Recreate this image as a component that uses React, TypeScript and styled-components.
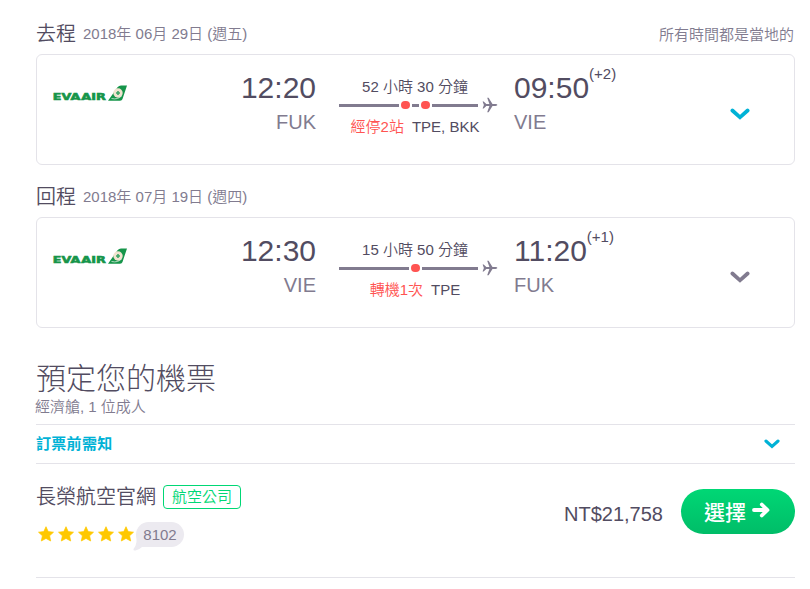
import React from 'react';
import styled, { createGlobalStyle } from 'styled-components';

const c = {
  dark: '#524c61',
  grey: '#817b8f',
  line: '#e4e3e9',
  cyan: '#00b2d6',
  red: '#ff5452',
  green: '#00d775',
  star: '#ffc800',
};

const GlobalStyle = createGlobalStyle`
  * { box-sizing: border-box; }
  body {
    margin: 0;
    background: #fff;
    color: ${c.dark};
    font-family: "Liberation Sans", "Noto Sans CJK TC", sans-serif;
    font-size: 15px;
    line-height: 20px;
    font-weight: 350;
  }
  svg { display: block; flex: none; }
`;

const Page = styled.main`
  width: 810px;
  height: 589px;
  padding: 2px 15px 0 36px;
  overflow: hidden;
`;

const LegHeader = styled.header`
  display: flex;
  align-items: flex-start;
  height: 52px;
  padding-top: 18px;
`;

const LegTitle = styled.h2`
  margin: 0 7px 0 0;
  font-size: 20px;
  font-weight: 350;
  line-height: 28px;
`;

const LegDate = styled.span`
  margin-top: 4px;
  color: ${c.grey};
`;

const LocalTimes = styled.span`
  margin: 5px 1px 0 auto;
  color: ${c.grey};
`;

const Card = styled.section`
  display: grid;
  grid-template-columns: 90px 189px 23px 159px 16px 1fr 64px;
  height: 111px;
  border: 1px solid ${c.line};
  border-radius: 6px;
`;

const LogoCell = styled.div`
  padding: 28px 0 0 15px;
`;

const Stop = styled.div<{ $end?: boolean }>`
  padding-top: 13px;
  text-align: ${(p) => (p.$end ? 'right' : 'left')};
`;

const TimeRow = styled.div`
  display: flex;
  align-items: flex-start;
`;

const Time = styled.div`
  font-size: 30px;
  line-height: 40px;
`;

const DayOffset = styled.div`
  margin-top: -4px;
`;

const Airport = styled.div`
  margin-top: 1px;
  font-size: 20px;
  line-height: 26px;
  color: ${c.grey};
`;

const Route = styled.div`
  padding-top: 22px;
`;

const Duration = styled.div`
  width: 152px;
  text-align: center;
`;

const Track = styled.div`
  display: flex;
  align-items: center;
  height: 20px;
  margin-top: -2px;
`;

const Rail = styled.div`
  display: flex;
  align-items: center;
  justify-content: center;
  gap: 2px;
  width: 139px;
`;

const Bar = styled.i<{ $short?: boolean; $first?: boolean }>`
  flex: ${(p) => (p.$short ? '0 0 7px' : p.$first ? '1 0 13px' : '1 0 0px')};
  height: 3px;
  background: ${c.grey};
`;

const Dot = styled.i`
  width: 9px;
  height: 8px;
  border-radius: 4px;
  background: ${c.red};
`;

const Stops = styled.div`
  display: flex;
  justify-content: center;
  gap: 8px;
  width: 152px;
  margin-top: 2px;
`;

const StopCount = styled.span`
  color: ${c.red};
`;

const Toggle = styled.div`
  padding-top: 53px;
`;

const BookingTitle = styled.h1`
  margin: 30px 0 0;
  font-size: 30px;
  line-height: 41px;
  font-weight: 300;
`;

const Subtitle = styled.div`
  margin-top: -2px;
  margin-left: -1px;
  height: 27px;
  color: ${c.grey};
`;

const Notice = styled.div`
  display: flex;
  align-items: center;
  justify-content: space-between;
  height: 40px;
  padding-right: 15px;
  border: 1px solid ${c.line};
  border-width: 1px 0;
  color: ${c.cyan};
  font-weight: 700;
  letter-spacing: 0.3px;
`;

const Offer = styled.section`
  display: flex;
  align-items: flex-start;
  height: 114px;
  border-bottom: 1px solid ${c.line};
`;

const Vendor = styled.div`
  flex: 1;
  padding-top: 21px;
`;

const NameRow = styled.div`
  display: flex;
  align-items: center;
  gap: 7px;
`;

const Name = styled.div`
  font-size: 20px;
  line-height: 24px;
`;

const Tag = styled.span`
  width: 78px;
  height: 24px;
  border: 1px solid ${c.green};
  border-radius: 4px;
  line-height: 22px;
  text-align: center;
  color: ${c.green};
`;

const RatingRow = styled.div`
  display: flex;
  align-items: center;
  gap: 4px;
  height: 25px;
  margin-top: 12px;
  padding-left: 2px;
`;

const Reviews = styled.span`
  position: relative;
  height: 25px;
  width: 48px;
  margin: 1px 0 0 -2px;
  border-radius: 13px;
  background: #eceaf0;
  color: ${c.grey};
  line-height: 26px;
  text-align: center;
  svg { position: absolute; left: -3px; top: 12px; }
  b { position: relative; font-weight: 400; }
`;

const Price = styled.div`
  margin: 36px 18px 0 0;
  font-size: 20px;
  line-height: 28px;
`;

const SelectButton = styled.button`
  display: flex;
  align-items: center;
  gap: 6px;
  width: 114px;
  height: 45px;
  margin-top: 25px;
  padding: 2px 0 0 23px;
  border: 0;
  border-radius: 23px;
  background: linear-gradient(#00d775, #00bd68);
  color: #fff;
  font: 500 21px/30px "Liberation Sans", "Noto Sans CJK TC", sans-serif;
`;

const EvaLogo = () => (
  <svg width="78" height="22" viewBox="0 0 78 22">
    <g fill="#16954a" stroke="#16954a" strokeWidth="0.6" fontFamily="DejaVu Sans" fontWeight="700" fontSize="9">
      <text x="0.8" y="17.4" textLength="27.5" lengthAdjust="spacingAndGlyphs">EVA</text>
      <text x="29.3" y="17.4" textLength="24.5" lengthAdjust="spacingAndGlyphs">AIR</text>
    </g>
    <path d="M56 17.7L65.5 4.2Q67 2.4 69 2.4H75L70.5 16Q70 17.7 68 17.7Z" fill="#16954a" />
    <circle cx="66" cy="10" r="4.7" fill="#f1e3cf" />
    <path d="M66 8V12M64 10H68" stroke="#3da568" strokeWidth="1.6" />
    <path d="M59.5 15.5Q66 17 70 12.5" fill="none" stroke="#d6eadb" strokeWidth="0.8" />
  </svg>
);

const Plane = () => (
  <svg width="16" height="16" viewBox="0 0 16 16">
    <path d="M.6 4.4H1.7L4.3 7.1H7.4L5.2.7H6.6L10.5 7.1H13.5Q15.4 7.3 15.4 8Q15.4 8.7 13.5 8.9H10.5L6.6 15.3H5.2L7.4 8.9H4.3L1.7 11.6H.6L1.9 8Z" fill={c.grey} />
  </svg>
);

const Chevron = ({ color, width = 20 }: { color: string; width?: number }) => (
  <svg width={width} height={width * 0.6} viewBox="0 0 20 12">
    <path d="M2.4 2.5L10 9.3L17.6 2.5" fill="none" stroke={color} strokeWidth="3.8" strokeLinecap="round" />
  </svg>
);

const Star = () => (
  <svg width="16" height="16" viewBox="0 0 16 16">
    <path d="M8 .7L10.2 5.6L15.5 6.2L11.6 9.8L12.7 15L8 12.4L3.3 15L4.4 9.8L.5 6.2L5.8 5.6Z" fill={c.star} stroke={c.star} strokeWidth=".7" strokeLinejoin="round" />
  </svg>
);

const Arrow = () => (
  <svg width="18" height="16" viewBox="0 0 18 16">
    <path d="M2 8H14.5M9.8 2.5L15.5 8L9.8 13.5" fill="none" stroke="#fff" strokeWidth="3.8" strokeLinecap="round" strokeLinejoin="round" />
  </svg>
);

const PlaneSlot = styled.div`
  margin-left: 4px;
`;

const ArrowSlot = styled.div`
  margin-top: -5px;
`;

interface LegData {
  title: string;
  date: string;
  note?: string;
  departs: string;
  from: string;
  duration: string;
  stops: string;
  via: string[];
  arrives: string;
  days: string;
  to: string;
  active?: boolean;
}

const legs: LegData[] = [
  { title: '去程', date: '2018年 06月 29日 (週五)', note: '所有時間都是當地的', departs: '12:20', from: 'FUK', duration: '52 小時 30 分鐘', stops: '經停2站', via: ['TPE', 'BKK'], arrives: '09:50', days: '(+2)', to: 'VIE', active: true },
  { title: '回程', date: '2018年 07月 19日 (週四)', departs: '12:30', from: 'VIE', duration: '15 小時 50 分鐘', stops: '轉機1次', via: ['TPE'], arrives: '11:20', days: '(+1)', to: 'FUK' },
];

const Leg = ({ leg }: { leg: LegData }) => (
  <>
    <LegHeader>
      <LegTitle>{leg.title}</LegTitle>
      <LegDate>{leg.date}</LegDate>
      {leg.note && <LocalTimes>{leg.note}</LocalTimes>}
    </LegHeader>
    <Card>
      <LogoCell><EvaLogo /></LogoCell>
      <Stop $end>
        <Time>{leg.departs}</Time>
        <Airport>{leg.from}</Airport>
      </Stop>
      <span />
      <Route>
        <Duration>{leg.duration}</Duration>
        <Track>
          <Rail>
            <Bar $first />
            {leg.via.map((code, i) => (
              <React.Fragment key={code}>
                {i > 0 && <Bar $short />}
                <Dot />
              </React.Fragment>
            ))}
            <Bar />
          </Rail>
          <PlaneSlot><Plane /></PlaneSlot>
        </Track>
        <Stops>
          <StopCount>{leg.stops}</StopCount>
          <span>{leg.via.join(', ')}</span>
        </Stops>
      </Route>
      <span />
      <Stop>
        <TimeRow>
          <Time>{leg.arrives}</Time>
          <DayOffset>{leg.days}</DayOffset>
        </TimeRow>
        <Airport>{leg.to}</Airport>
      </Stop>
      <Toggle><Chevron color={leg.active ? c.cyan : c.grey} /></Toggle>
    </Card>
  </>
);

export default function App() {
  return (
    <>
      <GlobalStyle />
      <Page>
        {legs.map((leg) => <Leg key={leg.title} leg={leg} />)}
        <BookingTitle>預定您的機票</BookingTitle>
        <Subtitle>經濟艙, 1 位成人</Subtitle>
        <Notice>
          <span>訂票前需知</span>
          <Chevron color={c.cyan} width={16} />
        </Notice>
        <Offer>
          <Vendor>
            <NameRow>
              <Name>長榮航空官網</Name>
              <Tag>航空公司</Tag>
            </NameRow>
            <RatingRow>
              {[1, 2, 3, 4, 5].map((n) => <Star key={n} />)}
              <Reviews>
                <svg width="16" height="17" viewBox="0 0 16 17"><path d="M3.5 0V8Q3 12 .5 15Q0 17 2.5 16.5Q7 15 9 13H15V0Z" fill="#eceaf0" /></svg>
                <b>8102</b>
              </Reviews>
            </RatingRow>
          </Vendor>
          <Price>NT$21,758</Price>
          <SelectButton>
            選擇
            <ArrowSlot><Arrow /></ArrowSlot>
          </SelectButton>
        </Offer>
      </Page>
    </>
  );
}
